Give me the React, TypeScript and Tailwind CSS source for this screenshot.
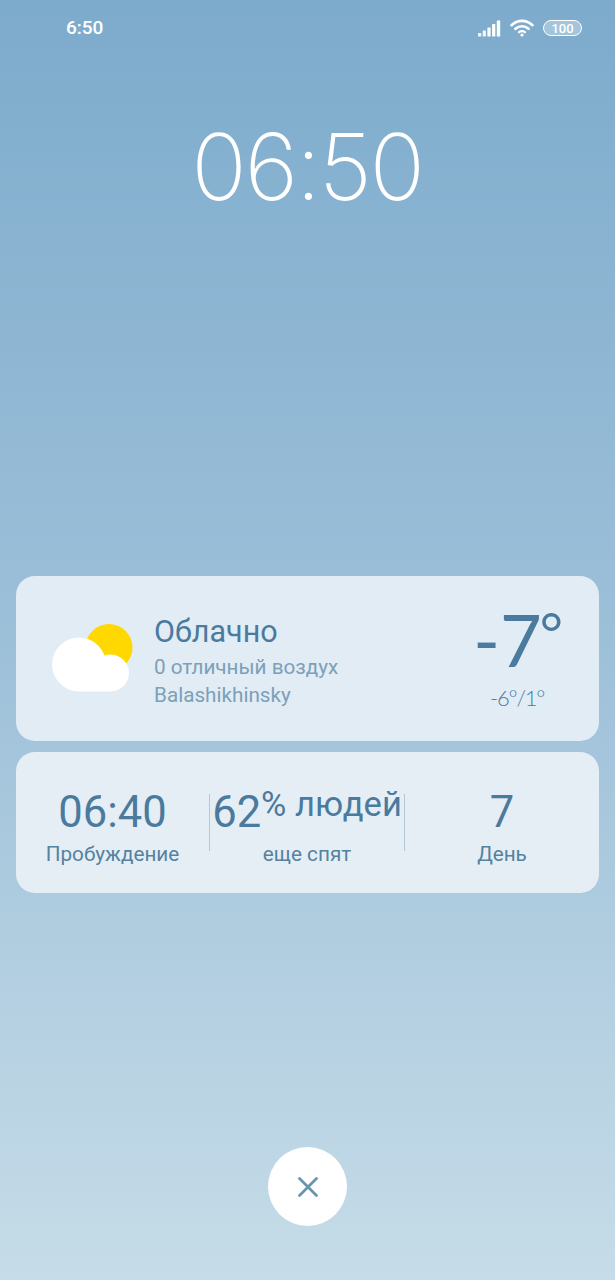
const SignalIcon = () => (
  <svg width="23" height="17" viewBox="0 0 23 17" fill="#fff">
    <rect x="0" y="13" width="3.2" height="3.5" rx="0.5" opacity="0.9" />
    <rect x="4.7" y="10.5" width="3.2" height="6" rx="0.5" opacity="0.9" />
    <rect x="9.4" y="7.5" width="3.2" height="9" rx="0.5" />
    <rect x="14.1" y="4" width="3.2" height="12.5" rx="0.5" />
    <rect x="18.8" y="0.5" width="3.4" height="16" rx="0.5" />
  </svg>
);

const WifiIcon = () => (
  <svg width="24" height="18" viewBox="0 0 24 18" fill="none" stroke="#fff" strokeLinecap="round">
    <path d="M1.5 6.2C7.5 0.4 16.5 0.4 22.5 6.2" strokeWidth="2.6" />
    <path d="M5.4 9.8C9.2 6.4 14.8 6.4 18.6 9.8" strokeWidth="2.6" />
    <path d="M9 13.2C10.8 11.8 13.2 11.8 15 13.2" strokeWidth="2.2" />
    <circle cx="12" cy="16" r="1.6" fill="#fff" stroke="none" />
  </svg>
);

const WeatherIcon = () => (
  <svg width="82" height="70" viewBox="0 0 82 70">
    <circle cx="57" cy="23.5" r="23.5" fill="#ffd800" />
    <circle cx="27" cy="40.5" r="27" fill="#fff" />
    <circle cx="58.5" cy="49" r="18.5" fill="#fff" />
    <rect x="27" y="40" width="31" height="27.5" fill="#fff" />
  </svg>
);

const Stat = ({ value, label }: { value: React.ReactNode; label: string }) => (
  <div className="flex flex-col items-center pt-[7px]">
    <div className="text-[43.5px] leading-[52px] text-[#4a7a9e] whitespace-nowrap">{value}</div>
    <div className="mt-[3px] text-[20.7px] leading-[24px] text-[#54829f] whitespace-nowrap">{label}</div>
  </div>
);

const App = () => {
  return (
    <div className="relative flex h-[1280px] w-[615px] flex-col overflow-hidden bg-gradient-to-b from-[#7dabcc] via-[#9dc0d9] to-[#c6dce8] font-['Roboto',sans-serif]">
      {/* status bar */}
      <div className="flex h-[56px] items-center justify-between pl-[66px] pr-[33px]">
        <span className="mt-[1px] text-[19px] font-medium text-white">6:50</span>
        <div className="flex items-center gap-[9px]">
          <SignalIcon />
          <WifiIcon />
          <div className="flex h-[16px] w-[39px] items-center justify-center rounded-[8px] border border-white bg-white/30 text-[13px] font-medium leading-none text-white">
            100
          </div>
        </div>
      </div>

      {/* clock */}
      <div className="mt-[61px] pr-[1px] text-center font-['Inter',sans-serif] text-[92px] font-[200] leading-[100px] tracking-[-2.4px] text-white">
        06:50
      </div>

      {/* weather */}
      <div className="mx-[16px] mt-[359px] flex h-[165px] items-center rounded-[19px] bg-[#e2ecf4] pl-[36px] pr-[38px]">
        <WeatherIcon />
        <div className="ml-[20px] flex-1 pt-[6px]">
          <div className="text-[30.5px] leading-[34px] text-[#4a7a9e]">Облачно</div>
          <div className="mt-[4px] text-[20.7px] leading-[28px] text-[#7ba0b9]">0 отличный воздух</div>
          <div className="text-[20.7px] leading-[28px] text-[#7ba0b9]">Balashikhinsky</div>
        </div>
        <div className="flex flex-col items-center pt-[2px] font-['Lato',sans-serif] text-[#4a7a9e]">
          <div className="text-[72px] leading-[66px]">
            -7<span className="relative -top-[13px] -mx-[2px] text-[56px] leading-none">°</span>
          </div>
          <div className="mt-[9px] text-[22px] font-light leading-[30px] tracking-[-1.2px]">-6°/1°</div>
        </div>
      </div>

      {/* sleep stats */}
      <div className="mx-[16px] mt-[11px] grid h-[141px] grid-cols-[193px_196px_194px] items-center rounded-[19px] bg-[#e5eef5]">
        <Stat value="06:40" label="Пробуждение" />
        <div className="flex h-[57px] items-center justify-center border-x border-[#b3c7d6]">
          <Stat
            value={
              <>
                62<span className="relative -top-[11px] text-[34.5px] leading-none">% людей</span>
              </>
            }
            label="еще спят"
          />
        </div>
        <Stat value="7" label="День" />
      </div>

      {/* close */}
      <div className="mt-[254px] flex justify-center">
        <button className="flex h-[79px] w-[79px] items-center justify-center rounded-full bg-white">
          <svg width="22" height="22" viewBox="0 0 22 22" stroke="#6b94ae" strokeWidth="2.8" strokeLinecap="round">
            <path d="M2.5 2.5L19.5 19.5M19.5 2.5L2.5 19.5" />
          </svg>
        </button>
      </div>
    </div>
  );
};

export default App;
